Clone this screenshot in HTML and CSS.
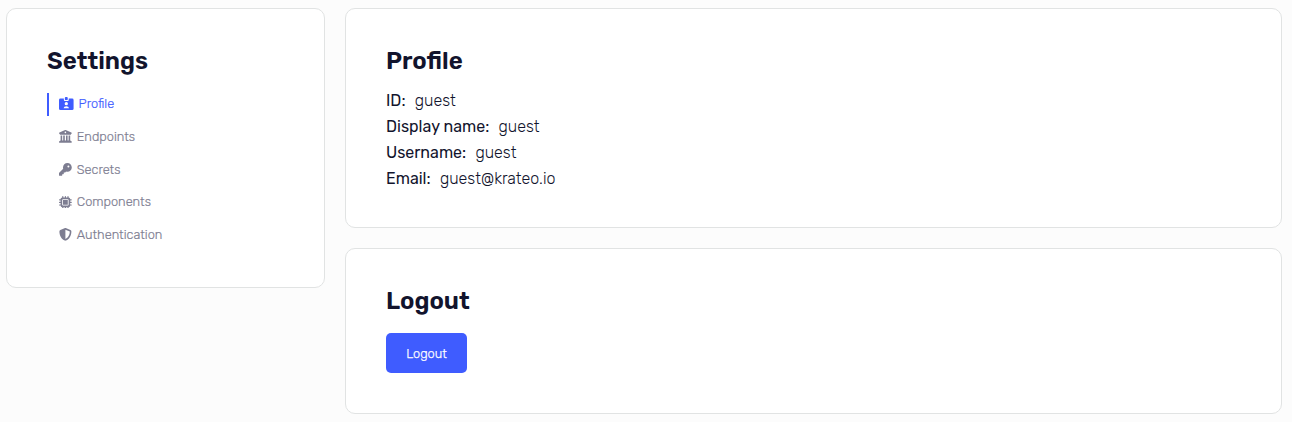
FILE: index.html
```html
<!DOCTYPE html>
<html lang="en">
<head>
<meta charset="utf-8">
<title>Settings</title>
<link rel="stylesheet" href="styles.css">
</head>
<body>
<div class="layout">
  <aside class="card sidebar">
    <h1 class="title">Settings</h1>
    <nav class="nav">
      <a class="nav-item active"><svg class="icon wide" viewBox="0 0 15 14"><path fill-rule="evenodd" d="M1.5 1.5H5V3Q5 4 6 4H9Q10 4 10 3V1.5H13.5Q15 1.5 15 3V12Q15 13.5 13.5 13.5H1.5Q0 13.5 0 12V3Q0 1.5 1.5 1.5ZM7.5 5.2A1.7 1.7 0 1 0 7.5 8.6A1.7 1.7 0 1 0 7.5 5.2ZM4.7 11.7H10.3Q10 9.4 7.5 9.4Q5 9.4 4.7 11.7Z"/><rect x="6" y="0" width="3" height="3.2" rx="1"/></svg><span>Profile</span></a>
      <a class="nav-item"><svg class="icon" viewBox="0 0 512 512"><path d="M243.4 2.6l-224 96c-14 6-21.800 21-18.700 35.800S16.800 160 32 160v8c0 13.300 10.700 24 24 24h400c13.300 0 24-10.700 24-24v-8c15.200 0 28.300-10.700 31.300-25.600s-4.800-29.900-18.700-35.800l-224-96c-8.100-3.400-17.200-3.400-25.200 0zM128 224H64v196.300l-2.500 1.600-48 32c-11.700 7.800-17 22.400-12.900 35.900S17.900 512 32 512h448c14.100 0 26.500-9.200 30.600-22.700s-1.100-28.100-12.900-35.900l-48-32-1.700-1.100V224h-64v192h-40V224h-64v192h-48V224h-64v192h-40zM256 64a32 32 0 1 1 0 64 32 32 0 1 1 0-64z"/></svg><span>Endpoints</span></a>
      <a class="nav-item"><svg class="icon" viewBox="0 0 512 512"><path d="M336 352c97.200 0 176-78.800 176-176S433.200 0 336 0 160 78.800 160 176c0 18.700 2.900 36.800 8.300 53.700L7 391c-4.500 4.500-7 10.600-7 17v80c0 13.300 10.700 24 24 24h80c13.300 0 24-10.700 24-24v-40h40c13.300 0 24-10.700 24-24v-40h40c6.400 0 12.500-2.500 17-7l33.300-33.300c16.900 5.400 35 8.300 53.700 8.300zM376 96a40 40 0 1 1 0 80 40 40 0 1 1 0-80z"/></svg><span>Secrets</span></a>
      <a class="nav-item"><svg class="icon" viewBox="0 0 512 512"><path fill-rule="evenodd" d="M176 24c0-32-48-32-48 0v40c-35 0-64 29-64 64H24c-32 0-32 48 0 48h40v56H24c-32 0-32 48 0 48h40v56H24c-32 0-32 48 0 48h40c0 35 29 64 64 64v40c0 32 48 32 48 0v-40h56v40c0 32 48 32 48 0v-40h56v40c0 32 48 32 48 0v-40c35 0 64-29 64-64h40c32 0 32-48 0-48h-40v-56h40c32 0 32-48 0-48h-40v-56h40c32 0 32-48 0-48h-40c0-35-29-64-64-64V24c0-32-48-32-48 0v40h-56V24c0-32-48-32-48 0v40h-56zM160 128h192q32 0 32 32v192q0 32-32 32H160q-32 0-32-32V160q0-32 32-32zm0 32v192h192V160z"/></svg><span>Components</span></a>
      <a class="nav-item"><svg class="icon" viewBox="0 0 512 512"><path fill-rule="evenodd" d="M256 0c4.600 0 9.200 1 13.400 2.900l188.300 79.900c22 9.300 38.400 31 38.300 57.200-.5 99.200-41.300 280.700-213.600 363.200-16.700 8-36.100 8-52.800 0C57.300 420.700 16.500 239.200 16 140c-.1-26.200 16.300-47.900 38.300-57.200L242.700 2.900C246.800 1 251.400 0 256 0zm0 66.800v378.100C394 378 431.100 230.100 432 141.400L256 66.800z"/></svg><span>Authentication</span></a>
    </nav>
  </aside>
  <main class="content">
    <section class="card">
      <h2 class="title">Profile</h2>
      <dl class="details">
        <div class="row"><dt>ID:</dt><dd>guest</dd></div>
        <div class="row"><dt>Display name:</dt><dd>guest</dd></div>
        <div class="row"><dt>Username:</dt><dd>guest</dd></div>
        <div class="row"><dt>Email:</dt><dd>guest@krateo.io</dd></div>
      </dl>
    </section>
    <section class="card">
      <h2 class="title">Logout</h2>
      <button class="button">Logout</button>
    </section>
  </main>
</div>
</body>
</html>
```
FILE: styles.css
```css
* { box-sizing: border-box; }
body { margin: 0; background: #fcfcfc; color: #12142d; font-family: Rubik, Roboto, sans-serif; }
.layout { display: grid; grid-template-columns: 319px 937px; gap: 20px; padding: 8px 0 8px 6px; align-items: start; }
.content { display: grid; gap: 20px; }
.card { background: #fff; border: 1px solid #e1e3e3; border-radius: 10px; padding: 40px; }
.sidebar { height: 280px; }
.title { margin: -4px 0 16px; font-size: 24px; line-height: 32px; font-weight: 600; white-space: nowrap; }
.nav { display: flex; flex-direction: column; gap: 10px; }
.nav-item { display: flex; align-items: center; gap: 5px; height: 22.7px; padding: 0 0 1px 10px; border-left: 2px solid transparent; color: #7d7d91; font-size: 12.8px; font-weight: 300; -webkit-text-stroke: 0.2px currentColor; white-space: nowrap; }
.nav-item.active { color: #3f5cff; border-color: #3f5cff; }
.icon { width: 12.8px; height: 12.8px; fill: currentColor; flex: none; }
.icon.wide { width: 14.6px; height: 13.6px; }
.details { margin: -5px 0 -5px; }
.row { display: flex; gap: 9.3px; font-size: 16px; line-height: 26px; white-space: nowrap; }
dt { font-weight: 400; }
dd { margin: 0; font-weight: 300; }
.button { display: block; width: 81px; height: 40px; padding: 0; border: 0; border-radius: 5px; background: #3f5cff; color: #fff; font: 300 12.8px Rubik, Roboto, sans-serif; -webkit-text-stroke: 0.25px currentColor; }
```
